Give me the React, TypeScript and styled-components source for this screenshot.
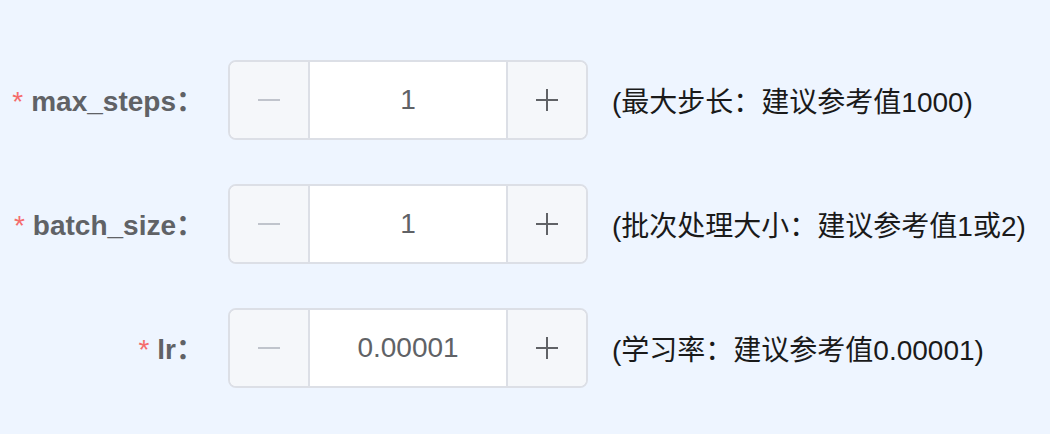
import React from "react";
import styled, { createGlobalStyle } from "styled-components";

const GlobalStyle = createGlobalStyle`
  html, body {
    margin: 0;
    padding: 0;
    background: #eef5ff;
  }
  body {
    font-family: "Liberation Sans", "Noto Sans CJK SC", sans-serif;
  }
`;

const Page = styled.div`
  width: 1050px;
  height: 434px;
  background: #eef5ff;
  box-sizing: border-box;
  padding-top: 60px;
  overflow: hidden;
`;

const Form = styled.form`
  display: flex;
  flex-direction: column;
  gap: 44px;
`;

const FormItem = styled.div`
  display: flex;
  align-items: center;
  height: 80px;
`;

const Label = styled.label`
  width: 228px;
  box-sizing: border-box;
  padding-right: 24px;
  text-align: right;
  line-height: 80px;
  font-size: 28px;
  font-weight: bold;
  color: #606266;
  white-space: nowrap;
`;

const Required = styled.span`
  color: #f56c6c;
  margin-right: 8px;
  font-weight: normal;
`;

const Colon = styled.span`
  font-family: "Noto Sans CJK SC", sans-serif;
  font-weight: bold;
`;

const InputNumber = styled.div`
  display: flex;
  width: 360px;
  height: 80px;
  box-sizing: border-box;
  border: 2px solid #dcdfe6;
  border-radius: 8px;
  overflow: hidden;
  background: #fff;
`;

const StepButton = styled.button<{ $side: "left" | "right" }>`
  width: 80px;
  flex: none;
  box-sizing: border-box;
  padding: 0;
  margin: 0;
  border: none;
  ${(p) => (p.$side === "left" ? "border-right: 2px solid #dcdfe6;" : "border-left: 2px solid #dcdfe6;")}
  background: #f5f7fa;
  display: flex;
  align-items: center;
  justify-content: center;
`;

const NumberField = styled.div`
  flex: 1;
  display: flex;
  align-items: center;
  justify-content: center;
  font-size: 28px;
  color: #606266;
  background: #fff;
`;

const Hint = styled.span`
  margin-left: 24px;
  font-size: 28px;
  color: #1a1a1a;
  white-space: nowrap;
`;

const Minus = ({ color }: { color: string }) => (
  <svg width="22" height="22" viewBox="0 0 22 22">
    <line x1="0" y1="11" x2="22" y2="11" stroke={color} strokeWidth="2" />
  </svg>
);

const Plus = ({ color }: { color: string }) => (
  <svg width="22" height="22" viewBox="0 0 22 22">
    <line x1="0" y1="11" x2="22" y2="11" stroke={color} strokeWidth="2" />
    <line x1="11" y1="0" x2="11" y2="22" stroke={color} strokeWidth="2" />
  </svg>
);

const fields = [
  { name: "max_steps", value: "1", hint: "(最大步长：建议参考值1000)" },
  { name: "batch_size", value: "1", hint: "(批次处理大小：建议参考值1或2)" },
  { name: "lr", value: "0.00001", hint: "(学习率：建议参考值0.00001)" },
];

export default function App() {
  return (
    <Page>
      <GlobalStyle />
      <Form>
        {fields.map((f) => (
          <FormItem key={f.name}>
            <Label>
              <Required>*</Required>
              {f.name}
              <Colon>：</Colon>
            </Label>
            <InputNumber>
              <StepButton type="button" $side="left">
                <Minus color="#c0c4cc" />
              </StepButton>
              <NumberField>{f.value}</NumberField>
              <StepButton type="button" $side="right">
                <Plus color="#606266" />
              </StepButton>
            </InputNumber>
            <Hint>{f.hint}</Hint>
          </FormItem>
        ))}
      </Form>
    </Page>
  );
}
